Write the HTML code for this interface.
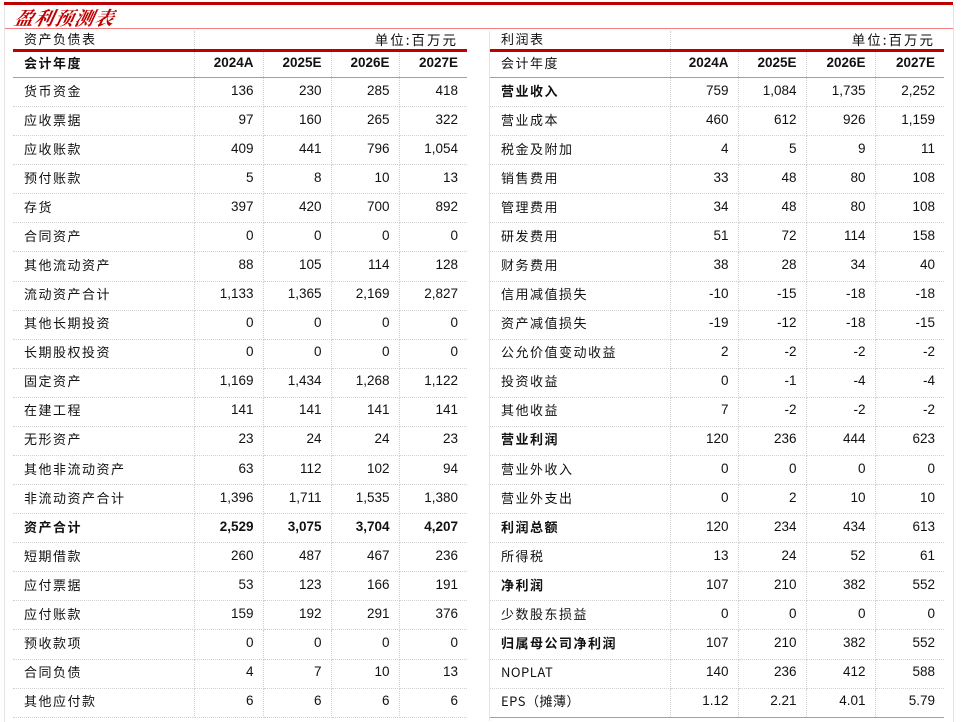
<!DOCTYPE html>
<html><head><meta charset="utf-8"><style>
body{margin:0;width:961px;height:722px;background:#fff;position:relative;overflow:hidden;font-family:"Liberation Sans","Noto Sans CJK SC",sans-serif;color:#111}
.top{position:absolute;left:4px;top:2px;width:949px;height:3px;background:#c00000}
.title{position:absolute;left:15px;top:4px;font-family:"Noto Serif CJK SC",serif;font-style:italic;font-weight:bold;color:#c00000;font-size:19px;letter-spacing:1px;transform:skewX(-12deg)}
.tl{position:absolute;left:4px;top:28px;width:949px;height:1px;background:#f08080}
.vl{position:absolute;top:5px;width:1px;height:717px;background:#e4e4e4}
table{position:absolute;top:31px;border-collapse:collapse;table-layout:fixed;font-size:13.5px;line-height:16px}
td{padding:0 9px 3px 6px;border-right:1px dotted #d0d0d0;border-bottom:1px dotted #d0d0d0;white-space:nowrap;overflow:hidden;line-height:16px}
td:last-child{border-right:none}
td.n{text-align:right}
td.c{font-family:"Noto Sans CJK SC",sans-serif;letter-spacing:1.5px;padding-left:11px;font-size:13px}
tr.h1 td{height:16px;border-bottom:3px solid #c00000;padding-bottom:2px}
tr.h2 td{height:22px;border-bottom:1px solid #f08080;font-weight:bold}
tr.d td{height:25.09px}
tr.b td{font-weight:bold}
tr.last td{border-bottom:1px solid #f08080}
</style></head><body>
<div class="top"></div>
<div class="title">盈利预测表</div>
<div class="tl"></div>
<div class="vl" style="left:4px"></div>
<div class="vl" style="left:953px"></div>
<div class="vl" style="left:489px;top:31px;height:690px"></div>

<table style="left:13px;width:454px">
<colgroup><col style="width:181px"><col style="width:69px"><col style="width:68px"><col style="width:68px"><col style="width:68px"></colgroup>
<tr class="h1"><td class="c">资产负债表</td><td colspan="4" class="n" style="letter-spacing:2px;font-family:'Noto Sans CJK SC',sans-serif">单位:百万元</td></tr>
<tr class="h2"><td class="c">会计年度</td><td class="n">2024A</td><td class="n">2025E</td><td class="n">2026E</td><td class="n">2027E</td></tr>
<tr class="d"><td class="c">货币资金</td><td class="n">136</td><td class="n">230</td><td class="n">285</td><td class="n">418</td></tr>
<tr class="d"><td class="c">应收票据</td><td class="n">97</td><td class="n">160</td><td class="n">265</td><td class="n">322</td></tr>
<tr class="d"><td class="c">应收账款</td><td class="n">409</td><td class="n">441</td><td class="n">796</td><td class="n">1,054</td></tr>
<tr class="d"><td class="c">预付账款</td><td class="n">5</td><td class="n">8</td><td class="n">10</td><td class="n">13</td></tr>
<tr class="d"><td class="c">存货</td><td class="n">397</td><td class="n">420</td><td class="n">700</td><td class="n">892</td></tr>
<tr class="d"><td class="c">合同资产</td><td class="n">0</td><td class="n">0</td><td class="n">0</td><td class="n">0</td></tr>
<tr class="d"><td class="c">其他流动资产</td><td class="n">88</td><td class="n">105</td><td class="n">114</td><td class="n">128</td></tr>
<tr class="d"><td class="c">流动资产合计</td><td class="n">1,133</td><td class="n">1,365</td><td class="n">2,169</td><td class="n">2,827</td></tr>
<tr class="d"><td class="c">其他长期投资</td><td class="n">0</td><td class="n">0</td><td class="n">0</td><td class="n">0</td></tr>
<tr class="d"><td class="c">长期股权投资</td><td class="n">0</td><td class="n">0</td><td class="n">0</td><td class="n">0</td></tr>
<tr class="d"><td class="c">固定资产</td><td class="n">1,169</td><td class="n">1,434</td><td class="n">1,268</td><td class="n">1,122</td></tr>
<tr class="d"><td class="c">在建工程</td><td class="n">141</td><td class="n">141</td><td class="n">141</td><td class="n">141</td></tr>
<tr class="d"><td class="c">无形资产</td><td class="n">23</td><td class="n">24</td><td class="n">24</td><td class="n">23</td></tr>
<tr class="d"><td class="c">其他非流动资产</td><td class="n">63</td><td class="n">112</td><td class="n">102</td><td class="n">94</td></tr>
<tr class="d"><td class="c">非流动资产合计</td><td class="n">1,396</td><td class="n">1,711</td><td class="n">1,535</td><td class="n">1,380</td></tr>
<tr class="d b"><td class="c">资产合计</td><td class="n">2,529</td><td class="n">3,075</td><td class="n">3,704</td><td class="n">4,207</td></tr>
<tr class="d"><td class="c">短期借款</td><td class="n">260</td><td class="n">487</td><td class="n">467</td><td class="n">236</td></tr>
<tr class="d"><td class="c">应付票据</td><td class="n">53</td><td class="n">123</td><td class="n">166</td><td class="n">191</td></tr>
<tr class="d"><td class="c">应付账款</td><td class="n">159</td><td class="n">192</td><td class="n">291</td><td class="n">376</td></tr>
<tr class="d"><td class="c">预收款项</td><td class="n">0</td><td class="n">0</td><td class="n">0</td><td class="n">0</td></tr>
<tr class="d"><td class="c">合同负债</td><td class="n">4</td><td class="n">7</td><td class="n">10</td><td class="n">13</td></tr>
<tr class="d"><td class="c">其他应付款</td><td class="n">6</td><td class="n">6</td><td class="n">6</td><td class="n">6</td></tr>
</table>

<table style="left:490px;width:454px">
<colgroup><col style="width:180px"><col style="width:68px"><col style="width:68px"><col style="width:69px"><col style="width:69px"></colgroup>
<tr class="h1"><td class="c">利润表</td><td colspan="4" class="n" style="letter-spacing:2px;font-family:'Noto Sans CJK SC',sans-serif">单位:百万元</td></tr>
<tr class="h2"><td class="c" style="font-weight:normal">会计年度</td><td class="n">2024A</td><td class="n">2025E</td><td class="n">2026E</td><td class="n">2027E</td></tr>
<tr class="d"><td class="c" style="font-weight:bold">营业收入</td><td class="n">759</td><td class="n">1,084</td><td class="n">1,735</td><td class="n">2,252</td></tr>
<tr class="d"><td class="c">营业成本</td><td class="n">460</td><td class="n">612</td><td class="n">926</td><td class="n">1,159</td></tr>
<tr class="d"><td class="c">税金及附加</td><td class="n">4</td><td class="n">5</td><td class="n">9</td><td class="n">11</td></tr>
<tr class="d"><td class="c">销售费用</td><td class="n">33</td><td class="n">48</td><td class="n">80</td><td class="n">108</td></tr>
<tr class="d"><td class="c">管理费用</td><td class="n">34</td><td class="n">48</td><td class="n">80</td><td class="n">108</td></tr>
<tr class="d"><td class="c">研发费用</td><td class="n">51</td><td class="n">72</td><td class="n">114</td><td class="n">158</td></tr>
<tr class="d"><td class="c">财务费用</td><td class="n">38</td><td class="n">28</td><td class="n">34</td><td class="n">40</td></tr>
<tr class="d"><td class="c">信用减值损失</td><td class="n">-10</td><td class="n">-15</td><td class="n">-18</td><td class="n">-18</td></tr>
<tr class="d"><td class="c">资产减值损失</td><td class="n">-19</td><td class="n">-12</td><td class="n">-18</td><td class="n">-15</td></tr>
<tr class="d"><td class="c">公允价值变动收益</td><td class="n">2</td><td class="n">-2</td><td class="n">-2</td><td class="n">-2</td></tr>
<tr class="d"><td class="c">投资收益</td><td class="n">0</td><td class="n">-1</td><td class="n">-4</td><td class="n">-4</td></tr>
<tr class="d"><td class="c">其他收益</td><td class="n">7</td><td class="n">-2</td><td class="n">-2</td><td class="n">-2</td></tr>
<tr class="d"><td class="c" style="font-weight:bold">营业利润</td><td class="n">120</td><td class="n">236</td><td class="n">444</td><td class="n">623</td></tr>
<tr class="d"><td class="c">营业外收入</td><td class="n">0</td><td class="n">0</td><td class="n">0</td><td class="n">0</td></tr>
<tr class="d"><td class="c">营业外支出</td><td class="n">0</td><td class="n">2</td><td class="n">10</td><td class="n">10</td></tr>
<tr class="d"><td class="c" style="font-weight:bold">利润总额</td><td class="n">120</td><td class="n">234</td><td class="n">434</td><td class="n">613</td></tr>
<tr class="d"><td class="c">所得税</td><td class="n">13</td><td class="n">24</td><td class="n">52</td><td class="n">61</td></tr>
<tr class="d"><td class="c" style="font-weight:bold">净利润</td><td class="n">107</td><td class="n">210</td><td class="n">382</td><td class="n">552</td></tr>
<tr class="d"><td class="c">少数股东损益</td><td class="n">0</td><td class="n">0</td><td class="n">0</td><td class="n">0</td></tr>
<tr class="d"><td class="c" style="font-weight:bold">归属母公司净利润</td><td class="n">107</td><td class="n">210</td><td class="n">382</td><td class="n">552</td></tr>
<tr class="d"><td class="c" style="letter-spacing:0.5px">NOPLAT</td><td class="n">140</td><td class="n">236</td><td class="n">412</td><td class="n">588</td></tr>
<tr class="d last"><td class="c" style="letter-spacing:0.5px">EPS（摊薄）</td><td class="n">1.12</td><td class="n">2.21</td><td class="n">4.01</td><td class="n">5.79</td></tr>
</table>
</body></html>
